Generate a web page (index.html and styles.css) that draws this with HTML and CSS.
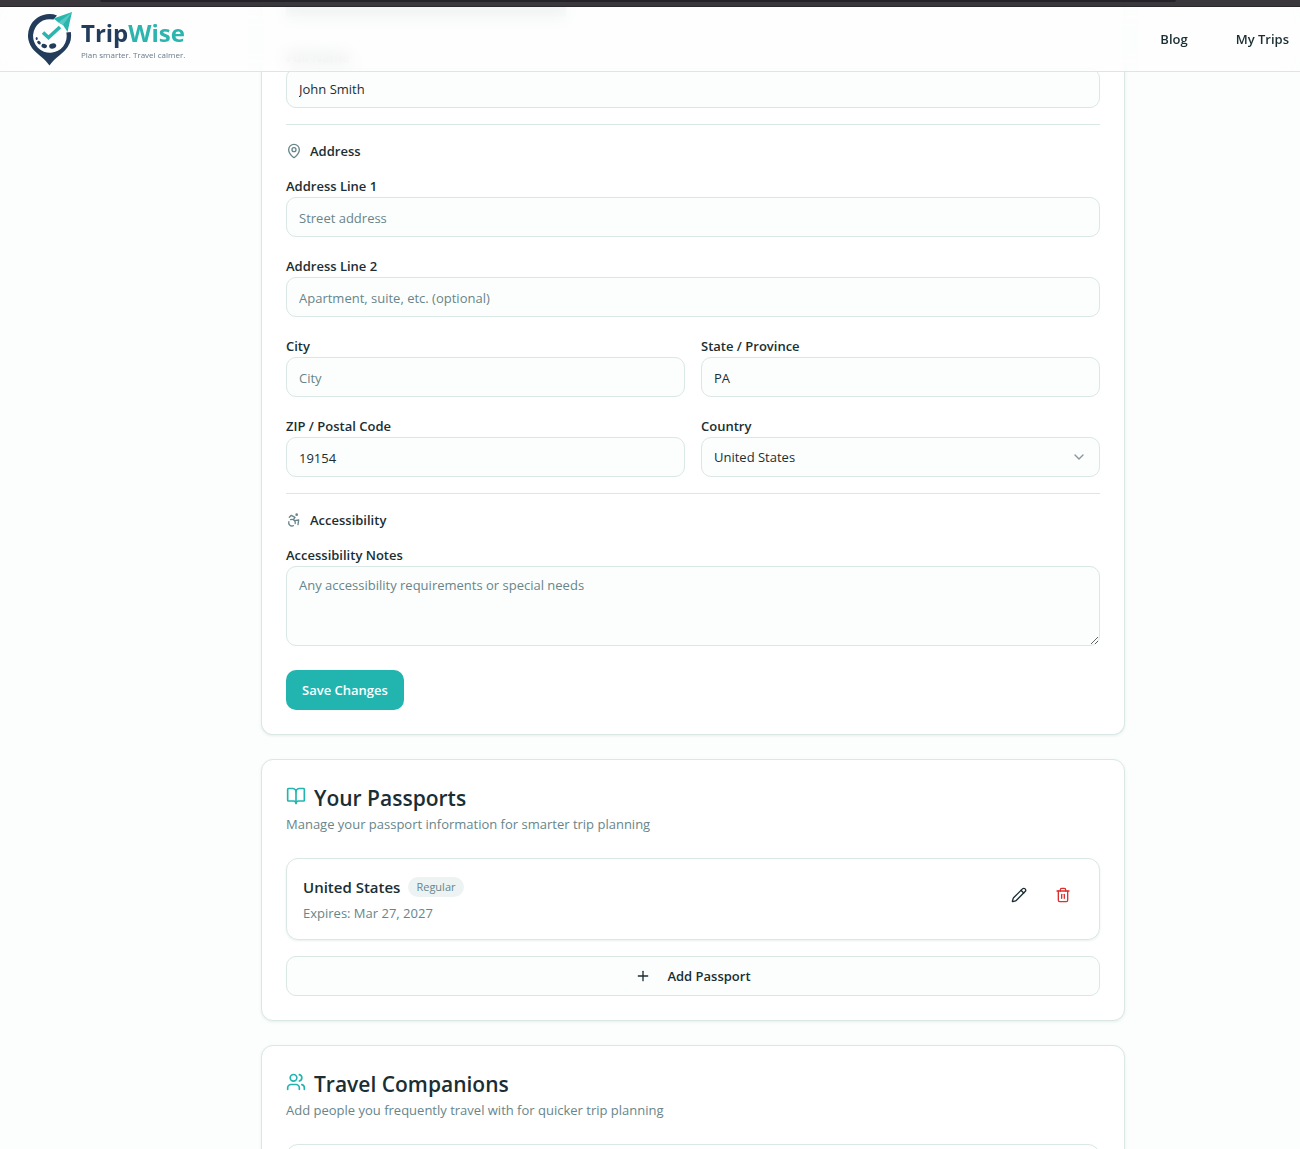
FILE: index.html
```html
<!DOCTYPE html>
<html lang="en">

<head>
    <meta charset="UTF-8">
    <meta name="viewport" content="width=device-width, initial-scale=1.0">
    <title>TripWise - Profile</title>
    <link rel="stylesheet" href="styles.css">
</head>

<body>

    <div class="window-edge"></div>

    <header class="site-header">
        <a class="logo" href="#">
            <svg class="logo-mark" viewBox="0 0 46 54" aria-hidden="true">
                <path fill="#233c5b" d="M22.5 2a21.5 21.5 0 0 0-15.6 36.3C11.5 43.200 18 47 22.500 53.500 27 47 33.500 43.200 38.100 38.300A21.500 21.500 0 0 0 43.800 20l-4.500 0.500A16.800 16.800 0 1 1 26.500 7.600L30 3.400A21.500 21.500 0 0 0 22.500 2z" />
                <path fill="#2bb5ae" d="M45 0 26.500 6.500 31.500 10.500 36 13 40.500 20z" />
                <path fill="#55cbc4" d="M45 0 31.500 10.500 36 13z" />
                <path fill="none" stroke="#2bb5ae" stroke-width="3.600" d="M16 20.500 21.500 25.500 33 15" />
                <g fill="#233c5b">
                    <ellipse cx="9.700" cy="26.500" rx="1" ry="1.500" />
                    <ellipse cx="12" cy="30.600" rx="2" ry="1.500" transform="rotate(40 12 30.600)" />
                    <ellipse cx="17.200" cy="34" rx="2.800" ry="2" transform="rotate(15 17.200 34)" />
                    <ellipse cx="25.700" cy="34" rx="3.600" ry="2.600" transform="rotate(-15 25.700 34)" />
                </g>
            </svg>
            <span class="logo-text">
                <span class="logo-name">Trip<span class="logo-accent">Wise</span></span>
                <span class="logo-tagline">Plan smarter. Travel calmer.</span>
            </span>
        </a>
        <nav class="site-nav">
            <a href="#">Blog</a>
            <a href="#">My Trips</a>
        </nav>
    </header>

    <main class="content">

        <section class="card card-profile">
            <div class="summary-line"></div>
            <form class="profile-form">
                <div class="field">
                    <label for="full-name">Full Name</label>
                    <input type="text" id="full-name" value="John Smith">
                </div>

                <hr>
                <h4 class="group-title">
                    <svg class="icon" viewBox="0 0 24 24" aria-hidden="true">
                        <path d="M20 10c0 4.993-5.539 10.193-7.399 11.799a1 1 0 0 1-1.202 0C9.539 20.193 4 14.993 4 10a8 8 0 0 1 16 0" />
                        <circle cx="12" cy="10" r="3" />
                    </svg>
                    Address
                </h4>
                <div class="fields">
                    <div class="field field-wide">
                        <label for="address-1">Address Line 1</label>
                        <input type="text" id="address-1" placeholder="Street address">
                    </div>
                    <div class="field field-wide">
                        <label for="address-2">Address Line 2</label>
                        <input type="text" id="address-2" placeholder="Apartment, suite, etc. (optional)">
                    </div>
                    <div class="field">
                        <label for="city">City</label>
                        <input type="text" id="city" placeholder="City">
                    </div>
                    <div class="field">
                        <label for="state">State / Province</label>
                        <input type="text" id="state" value="PA">
                    </div>
                    <div class="field">
                        <label for="zip">ZIP / Postal Code</label>
                        <input type="text" id="zip" value="19154">
                    </div>
                    <div class="field">
                        <label for="country">Country</label>
                        <div class="select-wrap">
                            <select id="country">
                                <option>United States</option>
                            </select>
                            <svg class="icon select-arrow" viewBox="0 0 24 24" aria-hidden="true">
                                <path d="m6 9 6 6 6-6" />
                            </svg>
                        </div>
                    </div>
                </div>

                <hr>
                <h4 class="group-title">
                    <svg class="icon" viewBox="0 0 24 24" aria-hidden="true">
                        <circle cx="16" cy="4" r="1" />
                        <path d="m18 19 1-7-6 1" />
                        <path d="m5 8 3-3 5.500 3-2.360 3.500" />
                        <path d="M4.240 14.500a5 5 0 0 0 6.880 6" />
                        <path d="M13.760 17.500a5 5 0 0 0-6.880-6" />
                    </svg>
                    Accessibility
                </h4>
                <div class="field">
                    <label for="notes">Accessibility Notes</label>
                    <textarea id="notes" placeholder="Any accessibility requirements or special needs"></textarea>
                </div>

                <button type="button" class="btn btn-primary">Save Changes</button>
            </form>
        </section>

        <section class="card">
            <h3 class="card-title">
                <svg class="icon icon-title" viewBox="0 0 24 24" aria-hidden="true">
                    <path d="M12 7v14" />
                    <path d="M3 18a1 1 0 0 1-1-1V4a1 1 0 0 1 1-1h5a4 4 0 0 1 4 4 4 4 0 0 1 4-4h5a1 1 0 0 1 1 1v13a1 1 0 0 1-1 1h-6a3 3 0 0 0-3 3 3 3 0 0 0-3-3z" />
                </svg>
                Your Passports
            </h3>
            <p class="card-text">Manage your passport information for smarter trip planning</p>

            <div class="item">
                <div class="item-info">
                    <div class="item-head">
                        <span class="item-name">United States</span>
                        <span class="badge">Regular</span>
                    </div>
                    <p class="item-text">Expires: Mar 27, 2027</p>
                </div>
                <div class="item-actions">
                    <button type="button" class="btn-icon" aria-label="Edit passport">
                        <svg class="icon" viewBox="0 0 24 24" aria-hidden="true">
                            <path d="M21.174 6.812a1 1 0 0 0-3.986-3.987L3.842 16.174a2 2 0 0 0-.5.83l-1.321 4.352a.5.5 0 0 0 .623.622l4.353-1.320a2 2 0 0 0 .83-.497z" />
                            <path d="m15 5 4 4" />
                        </svg>
                    </button>
                    <button type="button" class="btn-icon btn-delete" aria-label="Delete passport">
                        <svg class="icon" viewBox="0 0 24 24" aria-hidden="true">
                            <path d="M3 6h18" />
                            <path d="M19 6v14c0 1-1 2-2 2H7c-1 0-2-1-2-2V6" />
                            <path d="M8 6V4c0-1 1-2 2-2h4c1 0 2 1 2 2v2" />
                            <path d="M10 11v6" />
                            <path d="M14 11v6" />
                        </svg>
                    </button>
                </div>
            </div>

            <button type="button" class="btn btn-outline">
                <svg class="icon" viewBox="0 0 24 24" aria-hidden="true">
                    <path d="M5 12h14" />
                    <path d="M12 5v14" />
                </svg>
                Add Passport
            </button>
        </section>

        <section class="card">
            <h3 class="card-title">
                <svg class="icon icon-title" viewBox="0 0 24 24" aria-hidden="true">
                    <path d="M16 21v-2a4 4 0 0 0-4-4H6a4 4 0 0 0-4 4v2" />
                    <circle cx="9" cy="7" r="4" />
                    <path d="M22 21v-2a4 4 0 0 0-3-3.870" />
                    <path d="M16 3.130a4 4 0 0 1 0 7.750" />
                </svg>
                Travel Companions
            </h3>
            <p class="card-text">Add people you frequently travel with for quicker trip planning</p>
            <div class="item item-empty"></div>
        </section>

    </main>

</body>

</html>
```
FILE: styles.css
```css
:root {
    --text: #1a2e33;
    --muted: #67858a;
    --border: #d9e7e5;
    --page: #fcfefd;
    --teal: #22b5b0;
}

* {
    box-sizing: border-box;
}

body {
    margin: 0;
    height: 100vh;
    overflow: hidden;
    background: var(--page);
    color: var(--text);
    font-family: "Segoe UI", "Open Sans", "Noto Sans", sans-serif;
    font-size: 13px;
    line-height: 20px;
}

h3,
h4,
p {
    margin: 0;
}

a {
    color: inherit;
    text-decoration: none;
}

.window-edge {
    height: 7px;
    background: #3a383d;
    border-bottom: 1px solid #2b292e;
}

.window-edge::before {
    content: '';
    display: block;
    height: 2px;
    margin: 0 124px 0 100px;
    background: #242329;
    border-radius: 0 0 4px 4px;
}

/* header */

.site-header {
    position: sticky;
    top: 0;
    z-index: 10;
    display: flex;
    align-items: center;
    justify-content: space-between;
    height: 65px;
    padding: 0 11px 0 27px;
    background: rgba(252, 254, 253, 0.8);
    border-bottom: 1px solid var(--border);
    backdrop-filter: blur(8px);
}

.logo {
    display: flex;
    align-items: center;
    gap: 8px;
}

.logo-mark {
    width: 46px;
    height: 54px;
}

.logo-text {
    display: flex;
    flex-direction: column;
}

.logo-name {
    color: #233c5b;
    font-size: 24px;
    font-weight: 700;
    line-height: 32px;
}

.logo-accent {
    color: #2bb5ae;
}

.logo-tagline {
    color: #6b7a8c;
    font-size: 8px;
    line-height: 12px;
}

.site-nav {
    display: flex;
    gap: 48px;
    font-weight: 600;
}

/* cards */

.content {
    margin-top: -65px;
    padding-left: 86px;
}

.card {
    max-width: 864px;
    margin: 0 auto 24px;
    padding: 24px;
    background: #fff;
    border: 1px solid var(--border);
    border-radius: 12px;
    box-shadow: 0 1px 3px rgba(34, 100, 100, 0.1);
}

.card-profile {
    padding-top: 0;
    border-top: 0;
    border-radius: 0 0 12px 12px;
}

.summary-line {
    width: 280px;
    height: 10px;
    margin-bottom: 27px;
    background: #bccace;
}

.card-title {
    display: flex;
    gap: 8px;
    height: 30px;
    font-size: 21px;
    font-weight: 600;
    line-height: 28px;
}

.card-text {
    margin-bottom: 24px;
    color: var(--muted);
}

.icon {
    flex: none;
    width: 16px;
    height: 16px;
    fill: none;
    stroke: currentColor;
    stroke-width: 2;
    stroke-linecap: round;
    stroke-linejoin: round;
}

.icon-title {
    width: 20px;
    height: 20px;
    margin-top: 2px;
    color: var(--teal);
}

/* form */

hr {
    height: 1px;
    margin: 16px 0;
    background: var(--border);
    border: 0;
}

.group-title {
    display: flex;
    align-items: center;
    gap: 8px;
    margin-bottom: 12px;
    font-size: 13px;
    font-weight: 600;
}

.group-title .icon {
    color: var(--muted);
}

.fields {
    display: grid;
    grid-template-columns: 1fr 1fr;
    gap: 16px;
}

.field-wide {
    grid-column: 1 / -1;
}

.field label {
    display: block;
    padding-top: 2px;
    font-weight: 600;
    line-height: 22px;
}

input,
select,
textarea {
    display: block;
    width: 100%;
    height: 40px;
    padding: 0 12px;
    color: var(--text);
    background: var(--page);
    border: 1px solid var(--border);
    border-radius: 10px;
    font: inherit;
}

input {
    padding-top: 2px;
}

textarea {
    height: 80px;
    padding: 8px 12px;
}

::placeholder {
    color: var(--muted);
    opacity: 1;
}

.select-wrap {
    position: relative;
}

select {
    appearance: none;
}

.select-arrow {
    position: absolute;
    top: 12px;
    right: 13px;
    color: var(--text);
    opacity: 0.5;
    pointer-events: none;
}

/* buttons */

.btn {
    display: flex;
    align-items: center;
    justify-content: center;
    height: 40px;
    padding: 0 16px;
    border: 0;
    border-radius: 10px;
    font: inherit;
    font-weight: 600;
}

.btn-primary {
    margin-top: 24px;
    color: #fff;
    background: var(--teal);
}

.btn-outline {
    gap: 16px;
    width: 100%;
    color: var(--text);
    background: var(--page);
    border: 1px solid var(--border);
}

.btn-icon {
    display: flex;
    align-items: center;
    justify-content: center;
    width: 40px;
    height: 40px;
    padding: 0;
    color: var(--text);
    background: none;
    border: 0;
}

.btn-delete {
    color: #dc2f2f;
}

/* passport rows */

.item {
    display: flex;
    justify-content: space-between;
    margin-bottom: 16px;
    padding: 16px;
    border: 1px solid var(--border);
    border-radius: 12px;
    box-shadow: 0 1px 2px rgba(34, 100, 100, 0.1);
}

.item-empty {
    height: 82px;
}

.item-head {
    display: flex;
    align-items: center;
    gap: 8px;
    height: 24px;
    margin-bottom: 4px;
}

.item-name {
    font-size: 15px;
    font-weight: 600;
}

.badge {
    padding: 0 8px;
    color: var(--muted);
    background: #edf3f3;
    border-radius: 10px;
    font-size: 11px;
}

.item-text {
    color: var(--muted);
}

.item-actions {
    display: flex;
    gap: 4px;
}
```
